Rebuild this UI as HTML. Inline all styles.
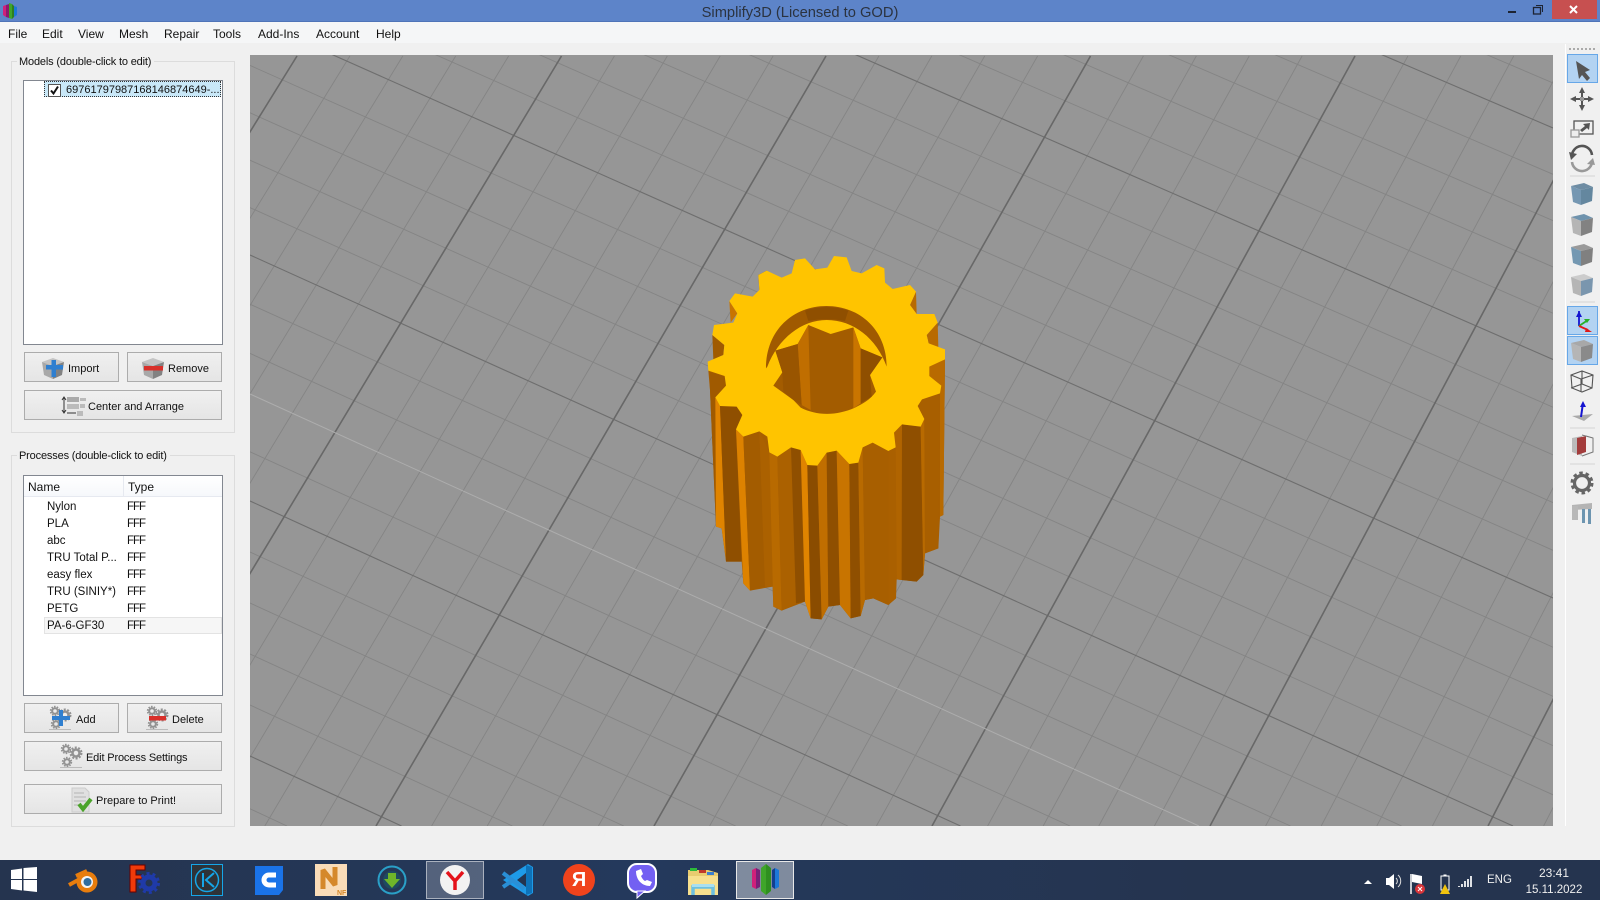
<!DOCTYPE html>
<html><head><meta charset="utf-8"><title>Simplify3D</title>
<style>
html,body{margin:0;padding:0;width:1600px;height:900px;overflow:hidden;background:#f0f0f0;font-family:"Liberation Sans",sans-serif;font-size:12px;color:#111}
.a{position:absolute}
.t{position:absolute;white-space:nowrap;line-height:14px}
.gb{position:absolute;border:1px solid #dcdcdc;box-sizing:border-box}
.lb{position:absolute;background:#f0f0f0;padding:0 3px 0 2px;line-height:14px;white-space:nowrap;font-size:11px;letter-spacing:-.16px}
.btn{position:absolute;box-sizing:border-box;border:1px solid #acacac;background:linear-gradient(#f0f0f0,#e5e5e5)}
.list{position:absolute;box-sizing:border-box;background:#fff;border:1px solid #828790}
.bt{font-size:11px}
.r{font-size:11.5px}
.f{font-size:11.5px;letter-spacing:-1px}
svg{position:absolute;display:block}
</style></head><body>
<div class="a" style="left:0;top:0;width:1600px;height:22px;background:#5d84c9;border-bottom:1px solid #4f74b8;box-sizing:border-box"></div>
<div class="t" style="left:0;width:1600px;text-align:center;top:5px;font-size:14.7px;color:#2b3340;line-height:16px">Simplify3D (Licensed to GOD)</div>
<div class="a" style="left:1552px;top:0;width:45px;height:19px;background:#c75050"></div>
<svg style="left:0;top:0" width="1600" height="22" viewBox="0 0 1600 22">
<polygon points="3,6 6,5 6,17 3,15" fill="#d0207a"/><polygon points="6,5 9,4 9,18 6,17" fill="#8a1a70"/>
<polygon points="9,3 12,4 12,19 9,18" fill="#3fa52a"/><polygon points="12,4 14,6 14,17 12,19" fill="#2f7f20"/>
<polygon points="14,6 17,7 17,15 14,17" fill="#1c78d8"/>
<rect x="1508" y="11" width="8" height="2" fill="#1d2433"/>
<rect x="1533.5" y="7.5" width="7" height="6.5" fill="none" stroke="#1d2433" stroke-width="1.3"/><path d="M1536 5.500h6.500v6.500" fill="none" stroke="#1d2433"/>
<path d="M1570 6l7 7M1577 6l-7 7" stroke="#fff" stroke-width="2"/>
</svg>
<div class="a" style="left:0;top:22px;width:1600px;height:21px;background:#f5f6f7"></div>
<div class="t" style="left:8px;top:27px">File</div><div class="t" style="left:42px;top:27px">Edit</div><div class="t" style="left:78px;top:27px">View</div><div class="t" style="left:119px;top:27px">Mesh</div><div class="t" style="left:164px;top:27px">Repair</div><div class="t" style="left:213px;top:27px">Tools</div><div class="t" style="left:258px;top:27px">Add-Ins</div><div class="t" style="left:316px;top:27px">Account</div><div class="t" style="left:376px;top:27px">Help</div>

<div class="gb" style="left:11px;top:61px;width:224px;height:372px"></div>
<div class="lb" style="left:17px;top:55px">Models (double-click to edit)</div>
<div class="list" style="left:23px;top:80px;width:200px;height:265px"></div>
<div class="a" style="left:44px;top:81px;width:177px;height:16px;background:#c9e8f8;outline:1px dotted #333;outline-offset:-1px"></div>
<div class="a" style="left:48px;top:84px;width:11px;height:11px;background:#fff;border:1px solid #555"></div>
<svg style="left:48px;top:84px" width="13" height="13"><path d="M3 6.500l2.500 3L10 2.500" fill="none" stroke="#111" stroke-width="2"/></svg>
<div class="t" style="left:66px;top:83px;font-size:11px">69761797987168146874649-...</div>

<div class="btn" style="left:24px;top:352px;width:95px;height:30px"></div><div class="t bt" style="left:68px;top:362px">Import</div>
<div class="btn" style="left:127px;top:352px;width:95px;height:30px"></div><div class="t bt" style="left:168px;top:362px">Remove</div>
<div class="btn" style="left:24px;top:390px;width:198px;height:30px"></div><div class="t bt" style="left:88px;top:400px">Center and Arrange</div>

<div class="gb" style="left:11px;top:455px;width:224px;height:372px"></div>
<div class="lb" style="left:17px;top:449px">Processes (double-click to edit)</div>
<div class="list" style="left:23px;top:475px;width:200px;height:221px"></div>
<div class="a" style="left:24px;top:476px;width:198px;height:21px;background:linear-gradient(#fff,#f6f8fb);border-bottom:1px solid #e6e9f0;box-sizing:border-box"></div>
<div class="a" style="left:123px;top:476px;width:1px;height:21px;background:#e6e9f0"></div>
<div class="t" style="left:28px;top:480px">Name</div><div class="t" style="left:128px;top:480px">Type</div>
<div class="a" style="left:44px;top:617px;width:178px;height:17px;background:#f6f6f6;border:1px solid #e3e3e3;box-sizing:border-box"></div>
<div class="t r" style="left:47px;top:500px">Nylon</div><div class="t f" style="left:127px;top:500px">FFF</div>
<div class="t r" style="left:47px;top:517px">PLA</div><div class="t f" style="left:127px;top:517px">FFF</div>
<div class="t r" style="left:47px;top:534px">abc</div><div class="t f" style="left:127px;top:534px">FFF</div>
<div class="t r" style="left:47px;top:551px">TRU Total P...</div><div class="t f" style="left:127px;top:551px">FFF</div>
<div class="t r" style="left:47px;top:568px">easy flex</div><div class="t f" style="left:127px;top:568px">FFF</div>
<div class="t r" style="left:47px;top:585px">TRU (SINIY*)</div><div class="t f" style="left:127px;top:585px">FFF</div>
<div class="t r" style="left:47px;top:602px">PETG</div><div class="t f" style="left:127px;top:602px">FFF</div>
<div class="t r" style="left:47px;top:619px">PA-6-GF30</div><div class="t f" style="left:127px;top:619px">FFF</div>

<div class="btn" style="left:24px;top:703px;width:95px;height:30px"></div><div class="t bt" style="left:76px;top:713px">Add</div>
<div class="btn" style="left:127px;top:703px;width:95px;height:30px"></div><div class="t bt" style="left:172px;top:713px">Delete</div>
<div class="btn" style="left:24px;top:741px;width:198px;height:30px"></div><div class="t bt" style="left:86px;top:751px;letter-spacing:-.15px">Edit Process Settings</div>
<div class="btn" style="left:24px;top:784px;width:198px;height:30px"></div><div class="t bt" style="left:96px;top:794px">Prepare to Print!</div>

<svg style="left:0;top:340px" width="250" height="490" viewBox="0 340 250 490">
<defs>
<g id="cb"><polygon points="-11,-6 0,-10 11,-6 0,-2" fill="#c4c4c4"/><polygon points="-11,-6 0,-2 0,11 -9,7" fill="#a8a8a8"/><polygon points="11,-6 0,-2 0,11 9,7" fill="#828282"/></g>
<g id="gr" fill="none"><circle r="3.500" stroke="#929292" stroke-width="2.500"/><circle r="5.500" stroke="#929292" stroke-width="2" stroke-dasharray="2 1.500"/></g>
<g id="grs"><use href="#gr" transform="translate(-5,-7) scale(.8)"/><use href="#gr" transform="translate(5,-3)"/><use href="#gr" transform="translate(-4,6) scale(.8)"/><rect x="-11" y="11" width="22" height="1" fill="#bbb"/></g>
</defs>
<use href="#cb" transform="translate(53,368)"/><rect x="46" y="365" width="17" height="4.500" fill="#2f7fd0"/><rect x="51.500" y="360" width="4.500" height="17" fill="#2f7fd0"/>
<use href="#cb" transform="translate(153,368)"/><rect x="144" y="366" width="19" height="4.500" fill="#d8302a"/>
<path d="M64 398v14M62 400l2-3 2 3M62 410l2 3 2-3" stroke="#333" fill="none"/>
<rect x="67" y="397" width="12" height="5" fill="#aaa"/><rect x="67" y="404" width="12" height="5" fill="#bbb"/><rect x="77" y="411" width="6" height="5" fill="#bbb"/><rect x="80" y="398" width="6" height="3" fill="#bbb"/><rect x="80" y="404" width="5" height="4" fill="#bbb"/><path d="M67 413h9" stroke="#333"/>
<use href="#grs" transform="translate(60,718)"/><rect x="52" y="716" width="18" height="4" fill="#2f7fd0"/><rect x="59" y="710" width="4" height="16" fill="#2f7fd0"/>
<use href="#grs" transform="translate(157,718)"/><rect x="149" y="716" width="17" height="4.500" fill="#d8302a"/>
<use href="#grs" transform="translate(71,756)"/>
<polygon points="72,788 85,788 89,792 89,812 72,812" fill="#e0e0e0" stroke="#ccc"/><path d="M74 793h10M74 797h12M74 801h12M74 805h8" stroke="#b4b4b4"/>
<path d="M79 804l4 5 8-10" fill="none" stroke="#4aa32a" stroke-width="4"/>
</svg>

<div class="a" style="left:250px;top:55px;width:1303px;height:771px;background:#969696"></div>
<svg style="left:250px;top:55px" width="1303" height="771" viewBox="250 55 1303 771">
<path fill="none" stroke="#848484" stroke-width=".9" d="M349.900 56L-124.400 826M402.800 56L-68.800 826M455.700 56L-13.200 826M508.600 56L42.400 826M614.400 56L153.600 826M667.300 56L209.200 826M720.200 56L264.800 826M773.100 56L320.400 826M878.900 56L431.600 826M931.800 56L487.200 826M984.700 56L542.800 826M1037.600 56L598.400 826M1143.400 56L709.600 826M1196.300 56L765.200 826M1249.200 56L820.800 826M1302.100 56L876.400 826M1407.900 56L987.600 826M1460.800 56L1043.200 826M1513.700 56L1098.800 826M1566.600 56L1154.400 826M1672.400 56L1265.600 826M1725.300 56L1321.200 826M1778.200 56L1376.800 826M1831.100 56L1432.400 826M1936.900 56L1543.600 826
M250 -474L1553 83M250 -386L1553 174.300M250 -342L1553 220.600M250 -298L1553 266.900M250 -254L1553 313.200M250 -164.400L1553 407.200M250 -118.800L1553 454.900M250 -73.200L1553 502.600M250 -27.600L1553 550.300M250 65.400L1553 647.200M250 112.800L1553 696.400M250 160.200L1553 745.600M250 207.600L1553 794.800M250 304.200L1401.600 826M250 353.400L1290.500 826M250 451.800L1070 826M250 552L847.800 826M250 603L735.600 826M250 654L623.800 826M250 705L512.400 826M250 808.800L287 826"/>
<path fill="none" stroke="#6e6e6e" stroke-width="1.100" d="M250 -430L1553 128M250 -210L1553 359.500M250 18L1553 598M250 255L1513 826M250 501L960.500 826M250 756L401.500 826"/>
<path fill="none" stroke="#686868" stroke-width="1.600" d="M297 56L-180 826M561.500 56L98 826M826 56L376 826M1090.500 56L654 826M1355 56L932 826M1619.500 56L1210 826M1884 56L1488 826"/>
<path fill="none" stroke="#adadad" stroke-width="1" d="M250 394L1199 826"/>
</svg>

<svg style="left:690px;top:240px" width="270" height="390" viewBox="0 0 810 1170">
<polygon fill="#a85f00" points="765,358 760,825 750,830 745,925 705,940 700,1005 680,1025 620,1018 618,1075 595,1095 550,1075 525,1080 512,1128 482,1135 450,1095 415,1100 395,1138 362,1135 345,1085 275,1112 250,1100 248,1040 180,1052 160,1030 155,965 108,965 95,865 78,860 60,450 55,392"/>
<polygon fill="#a05a00" points="58,395 105,410 108,437 76,472 78,860 60,450"/>
<polygon fill="#e08400" points="76,472 90,498 108,960 95,865 78,860"/>
<polygon fill="#8f4f00" points="90,498 140,500 157,525 138,568 155,965 108,965"/>
<polygon fill="#dd8200" points="138,568 160,590 180,1052 160,1030"/>
<polygon fill="#a35c00" points="160,590 208,574 225,1040 180,1052"/>
<polygon fill="#ab6100" points="208,574 238,637 250,1100 248,1040 225,1040"/>
<polygon fill="#b86a00" points="238,637 262,650 275,1112 250,1100"/>
<polygon fill="#ab6100" points="262,650 303,622 318,1090 275,1112"/>
<polygon fill="#8f4f00" points="303,622 332,630 345,1085 318,1090"/>
<polygon fill="#e08400" points="332,630 352,675 362,1135 345,1085"/>
<polygon fill="#8a4c00" points="352,675 382,677 395,1138 362,1135"/>
<polygon fill="#c06e00" points="382,677 410,638 415,1100 395,1138"/>
<polygon fill="#8f4f00" points="410,638 440,632 450,1095 415,1100"/>
<polygon fill="#c87400" points="440,632 478,672 482,1135 450,1095"/>
<polygon fill="#8f4f00" points="478,672 505,668 512,1128 482,1135"/>
<polygon fill="#b86a00" points="505,668 518,622 525,1080 512,1128"/>
<polygon fill="#a85f00" points="518,622 548,608 595,633 595,1095 550,1075 525,1080"/>
<polygon fill="#aa6000" points="595,633 617,622 618,1075 595,1095"/>
<polygon fill="#b06400" points="612,578 636,553 635,1020 620,1018 617,622"/>
<polygon fill="#8f4f00" points="636,553 692,560 700,1005 680,1025 635,1020"/>
<polygon fill="#b86a00" points="692,560 703,537 705,940 700,1005"/>
<polygon fill="#a85f00" points="703,537 683,498 696,478 750,460 745,925 705,940"/>
<polygon fill="#b86a00" points="750,460 754,437 718,408 718,380 765,358 760,825 750,830"/>
<polygon fill="#c97500" points="118,183 142,220 122,248"/>
<polygon fill="#8f4f00" points="205,105 230,92 208,150"/>
<polygon fill="#b86a00" points="678,155 660,195 680,222"/>
<polygon fill="#b86a00" points="743,248 710,285 716,310 745,322"/>
<polygon fill="#a05a00" points="67,285 103,315 100,345 70,358"/>
<polygon fill="#FFC400" points="315,60 345,55 375,88 412,83 432,48 470,52 485,93 515,100 560,75 583,85 585,128 608,147 660,135 678,155 660,195 680,222 733,222 743,248 710,285 716,310 765,328 765,358 718,380 718,408 754,437 750,460 696,478 683,498 703,537 692,560 636,553 612,578 617,622 595,633 548,608 518,622 505,668 478,672 440,632 410,638 382,677 352,675 332,630 303,622 262,650 238,637 232,590 208,574 160,590 138,568 157,525 140,500 90,498 76,472 108,437 104,408 55,392 53,365 100,345 103,315 67,285 72,255 130,248 142,220 118,183 135,160 188,170 208,150 205,105 230,92 275,113 305,100"/>
<path d="M228 385C228 270 310 198 409 198C510 198 590 270 590 380C560 295 490 240 410 240C335 240 265 295 232 380Z" fill="#a05a00"/>
<path d="M345 212C385 198 435 198 475 212L465 243C430 236 390 236 355 243Z" fill="#8f4f00"/>
<path d="M355 255L422 282L490 262L512 325L577 352L540 405L558 455C540 480 520 490 495 503C440 528 380 528 332 503L310 480L250 437L277 397L256 332L323 312Z" fill="#a35c00"/>
<polygon fill="#c06e00" points="323,312 355,255 362,510 335,495"/>
<polygon fill="#c97500" points="490,262 512,325 512,490 490,505"/>
<polygon fill="#995500" points="277,397 256,332 323,312 335,495 310,480 280,455"/>
<polygon fill="#8f4f00" points="512,325 577,352 540,405 545,470 512,490"/>
</svg>

<div class="a" style="left:1565px;top:44px;width:35px;height:782px;background:#f0f0f0;border-left:1px solid #fff;box-sizing:border-box"></div>
<div class="a" style="left:1567px;top:54px;width:31px;height:29px;background:#b3d3f2;border:1px solid #66a7e8;box-sizing:border-box"></div>
<div class="a" style="left:1567px;top:306px;width:31px;height:29px;background:#b3d3f2;border:1px solid #66a7e8;box-sizing:border-box"></div>
<div class="a" style="left:1567px;top:336px;width:31px;height:29px;background:#b3d3f2;border:1px solid #66a7e8;box-sizing:border-box"></div>
<svg style="left:1565px;top:44px;filter:blur(.35px)" width="35" height="490" viewBox="1565 44 35 490">
<path d="M1569 49h26" stroke="#aaa" stroke-width="2" stroke-dasharray="2 2"/>
<polygon points="1576,61 1590,70 1585,72 1590,78 1587,81 1582,75 1579,79" fill="#555"/>
<g fill="#555"><polygon points="1582,87 1585,93 1579,93"/><polygon points="1582,111 1585,105 1579,105"/><polygon points="1570,99 1576,96 1576,102"/><polygon points="1594,99 1588,96 1588,102"/><rect x="1581" y="92" width="2" height="5"/><rect x="1581" y="101" width="2" height="5"/><rect x="1575" y="98" width="5" height="2"/><rect x="1584" y="98" width="5" height="2"/></g><rect x="1580" y="97" width="4" height="4" fill="#999"/>
<rect x="1574" y="121" width="19" height="13" fill="none" stroke="#555" stroke-width="1.300"/><rect x="1571" y="130" width="8" height="7" fill="#eee" stroke="#999" stroke-width="1.300"/><polygon points="1590,123 1583,124 1585,126 1580,130 1582,132 1587,128 1589,130" fill="#555"/>
<path d="M1572 157A10 10 0 0 1 1592 155" fill="none" stroke="#555" stroke-width="2.600"/><polygon points="1569,152 1577,154 1571,160" fill="#555"/>
<path d="M1592 160A10 10 0 0 1 1572 162" fill="none" stroke="#999" stroke-width="2.600"/><polygon points="1595,165 1587,164 1593,158" fill="#999"/>
<path d="M1570 176h25M1570 302h25M1570 428h25M1570 464h25" stroke="#d4d4d4"/>
<g transform="translate(1582,194)"><polygon points="-11,-8 2,-11 11,-7 -1,-4" fill="#6e8ca3"/><polygon points="-11,-8 -1,-4 -1,11 -9,8" fill="#7597b2"/><polygon points="11,-7 -1,-4 -1,11 10,7" fill="#64879f"/></g>
<g transform="translate(1582,225)"><polygon points="-11,-8 2,-11 11,-7 -1,-4" fill="#6f93ad"/><polygon points="-11,-8 -1,-4 -1,11 -9,8" fill="#b5b5b5"/><polygon points="11,-7 -1,-4 -1,11 10,7" fill="#828282"/></g>
<g transform="translate(1582,255)"><polygon points="-11,-8 2,-11 11,-7 -1,-4" fill="#9a9a9a"/><polygon points="-11,-8 -1,-4 -1,11 -9,8" fill="#7498b2"/><polygon points="11,-7 -1,-4 -1,11 10,7" fill="#808080"/></g>
<g transform="translate(1582,285)"><polygon points="-11,-8 2,-11 11,-7 -1,-4" fill="#ccc"/><polygon points="-11,-8 -1,-4 -1,11 -9,8" fill="#b5b5b5"/><polygon points="11,-7 -1,-4 -1,11 10,7" fill="#7a96ae"/></g>
<path d="M1579 311v15" stroke="#1414d0" stroke-width="1.800"/><polygon points="1579,311 1576,317 1582,317" fill="#1414d0"/>
<path d="M1579 326l9-6" stroke="#28b028" stroke-width="1.800"/><polygon points="1590,319 1584,319 1587,323" fill="#28b028"/>
<path d="M1579 326l9 4" stroke="#e01818" stroke-width="1.800"/><polygon points="1592,332 1586,328 1585,332" fill="#e01818"/>
<g transform="translate(1582,351)"><polygon points="-11,-8 2,-11 11,-7 -1,-4" fill="#a8a8a8"/><polygon points="-11,-8 -1,-4 -1,11 -9,8" fill="#b5b5b5"/><polygon points="11,-7 -1,-4 -1,11 10,7" fill="#8a8a8a"/></g>
<path d="M1571 375l11-4 11 4-1 13-10 4-10-4zM1571 375l10 4 12-4M1581 379v13M1582 371v13M1571 388l11-4 10 4" fill="none" stroke="#555" stroke-width="1.100"/>
<polygon points="1572,416 1593,414 1584,421" fill="#aaa"/><path d="M1581 417l2-14" stroke="#1414d0" stroke-width="2"/><polygon points="1583,401 1580,407 1586,407" fill="#1414d0"/>
<polygon points="1572,438 1582,436 1582,456 1572,452" fill="#bbb"/><polygon points="1577,438 1586,436 1586,452 1577,455" fill="#a33c3c"/><path d="M1582 435l11 3v14l-11 4M1586 436l7 2" fill="none" stroke="#777"/>
<circle cx="1582" cy="483" r="7.500" fill="none" stroke="#666" stroke-width="3.200"/><circle cx="1582" cy="483" r="10" fill="none" stroke="#666" stroke-width="3" stroke-dasharray="3.500 2.800"/>
<polygon points="1572,505 1592,503 1592,509 1572,510" fill="#b4b4b4"/><rect x="1572" y="506" width="6" height="14" fill="#b8b8b8"/><rect x="1582" y="509" width="3" height="14" fill="#6d95b0"/><rect x="1588" y="509" width="3" height="15" fill="#6d95b0"/>
</svg>

<div class="a" style="left:0;top:860px;width:1600px;height:40px;background:linear-gradient(90deg,#25344f,#24395c 40%,#25344f 75%,#25344f)"></div>
<div class="a" style="left:426px;top:861px;width:58px;height:38px;background:rgba(255,255,255,.22);border:1px solid rgba(255,255,255,.5);box-sizing:border-box"></div>
<div class="a" style="left:736px;top:861px;width:58px;height:38px;background:rgba(255,255,255,.42);border:1px solid #e8e8e8;box-sizing:border-box"></div>
<svg style="left:0;top:860px" width="1600" height="40" viewBox="0 860 1600 40">
<g fill="#fff"><polygon points="11,870 22,868.500 22,879 11,879"/><polygon points="23.500,868 37,867 37,879 23.500,879"/><polygon points="11,880 22,880 22,890.500 11,889"/><polygon points="23.500,880 37,880 37,892 23.500,890.500"/></g>
<path d="M69 885l11-6M76 876l11-5" stroke="#e87d0d" stroke-width="4" fill="none"/><circle cx="87" cy="882" r="10.500" fill="#e87d0d"/><circle cx="87" cy="882" r="6" fill="#f4f4f4"/><circle cx="87.500" cy="882" r="4" fill="#2f6d9f"/>
<path d="M130 865h15v5h-9v5h6v4h-6v13h-6z" fill="#f03a0a" stroke="#600" stroke-width="1"/>
<circle cx="149" cy="883" r="6" fill="none" stroke="#1f3aa8" stroke-width="5"/><circle cx="149" cy="883" r="9.500" fill="none" stroke="#1f3aa8" stroke-width="3" stroke-dasharray="3 3"/>
<rect x="191.500" y="864.500" width="31" height="31" fill="#2e3338" stroke="#16a6e8"/><circle cx="207" cy="880" r="11.500" fill="none" stroke="#16a6e8" stroke-width="1.500"/><path d="M203 873v14M214 873l-8 7 8 7" fill="none" stroke="#16a6e8" stroke-width="2"/>
<path d="M255 866h28v24l-4 5h-24z" fill="#1a73e8"/><path d="M276 875h-7a5 5 0 0 0 0 10h7" fill="none" stroke="#fff" stroke-width="5"/>
<rect x="315" y="864" width="32" height="32" fill="#f9dcb8"/><path d="M323 889v-19l12 15v-18" fill="none" stroke="#d5882a" stroke-width="5" stroke-linejoin="bevel"/><text x="337" y="895" font-size="7" font-weight="bold" fill="#d5882a" font-family="Liberation Sans,sans-serif">NF</text>
<circle cx="392" cy="880" r="13.500" fill="none" stroke="#2aa0c8" stroke-width="2"/><circle cx="392" cy="880" r="9" fill="#1e4a60"/><polygon points="388,873 396,873 396,879 400,879 392,888 384,879 388,879" fill="#6fb52a"/>
<circle cx="455" cy="880" r="15" fill="#f2f2f2"/><path d="M447 872l8 9 8-9M455 881v9" fill="none" stroke="#e4121a" stroke-width="3.500"/>
<polygon points="503,880 528,864 533,867 533,893 528,896 503,880" fill="#1e9be8"/><polygon points="532,867 526,865 526,895 532,893" fill="#0e72b8"/><path d="M503 873l21 16M503 887l10-7" stroke="#2a8fd6" stroke-width="4"/><polygon points="517,880 526,873 526,887" fill="#24344f"/>
<circle cx="579" cy="880" r="16" fill="#f0431c"/>
<rect x="628" y="864" width="28" height="28" rx="9" fill="#7360f2" stroke="#fff" stroke-width="2"/><polygon points="637,891 645,891 637,898" fill="#7360f2" stroke="#fff"/><path d="M636 871c0 9 6 15 14 15l2-4-5-2-2 1c-2-1-3-3-4-5l2-2-2-5z" fill="#fff"/>
<polygon points="688,870 708,870 718,873 718,895 688,895" fill="#e8cc70"/><rect x="690" y="868" width="7" height="3" fill="#2dbb3a"/><rect x="699" y="870" width="7" height="3" fill="#c0392b"/><rect x="707" y="872" width="7" height="3" fill="#3a7fd0"/><polygon points="688,876 718,876 718,895 688,895" fill="#f7e08e"/><path d="M693 895v-8h20v8" fill="none" stroke="#6cc0e0" stroke-width="3.500"/><rect x="692" y="884" width="22" height="3" fill="#a8dff0"/>
<polygon points="752,870 756,868 756,889 752,887" fill="#d0207a"/><polygon points="756,868 760,870 760,887 756,889" fill="#7a1f78"/>
<polygon points="761,868 766,864 766,895 761,891" fill="#3fa52a"/><polygon points="766,864 771,868 771,891 766,895" fill="#2f8f20"/>
<polygon points="772,870 775,868 775,889 772,887" fill="#123f8f"/><polygon points="775,868 779,870 779,887 775,889" fill="#1c78d8"/>
<polygon points="1368,880 1372,884 1364,884" fill="#fff"/>
<polygon points="1386,878 1389,878 1394,874 1394,889 1389,885 1386,885" fill="#fff"/><path d="M1396 878a4 4 0 0 1 0 6M1398 875a8 8 0 0 1 0 12" fill="none" stroke="#ddd"/>
<path d="M1411 874v20" stroke="#fff" stroke-width="1.500"/><polygon points="1412,874 1422,876 1422,884 1412,882" fill="#fff"/><circle cx="1420" cy="889" r="5" fill="#d8353a"/><path d="M1418 887l4 4M1422 887l-4 4" stroke="#fff"/>
<rect x="1441" y="876" width="8" height="14" fill="none" stroke="#fff"/><rect x="1443.500" y="874.500" width="3" height="2" fill="#fff"/><polygon points="1445,884 1450,894 1440,894" fill="#f2c40e"/>
<path d="M1459 886v1M1462 884v3M1465 881v6M1468 879v8M1471 876v11" stroke="#fff" stroke-width="1.700"/>
</svg>
<div class="t" style="left:564px;top:870px;width:30px;text-align:center;font-size:20px;line-height:20px;color:#fff;font-weight:bold">Я</div>
<div class="t" style="left:1487px;top:873px;color:#f0f0f0;font-size:11.5px">ENG</div>
<div class="t" style="left:1500px;top:866px;width:108px;text-align:center;color:#f0f0f0">23:41</div>
<div class="t" style="left:1500px;top:883px;width:108px;text-align:center;color:#f0f0f0;font-size:11.5px">15.11.2022</div>
</body></html>
